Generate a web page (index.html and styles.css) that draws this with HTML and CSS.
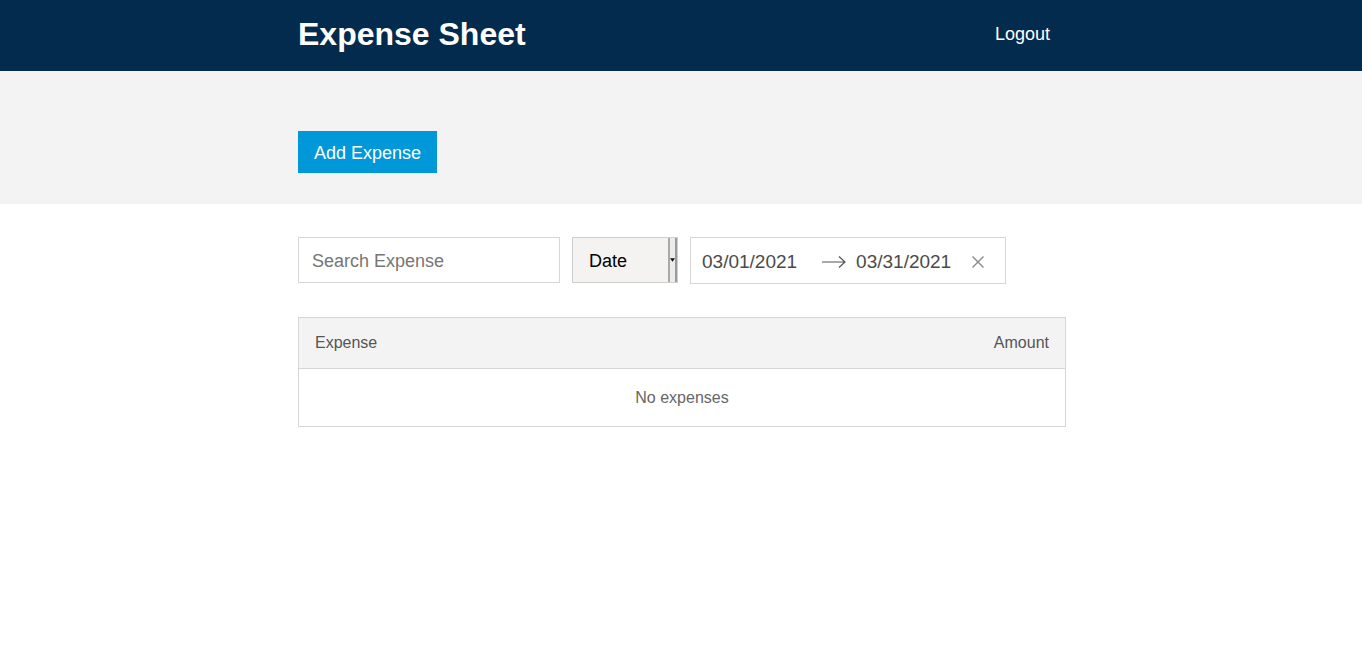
FILE: index.html
```html
<!DOCTYPE html>
<html>
<head>
<meta charset="utf-8">
<title>Expense Sheet</title>
<link rel="stylesheet" href="styles.css">
</head>
<body>
<header class="topbar">
  <div class="container topbar-inner">
    <h1 class="brand">Expense Sheet</h1>
    <a class="logout">Logout</a>
  </div>
</header>
<section class="band">
  <div class="container">
    <button class="add-btn">Add Expense</button>
  </div>
</section>
<main class="container main">
  <div class="filters">
    <div class="search">Search Expense</div>
    <div class="select">
      <span class="select-label">Date</span>
      <span class="select-arrow"><svg width="6" height="4" viewBox="0 0 6 4"><path d="M0 0H6L3 4Z" fill="#111"/></svg></span>
    </div>
    <div class="range">
      <span class="date">03/01/2021</span>
      <svg class="arrow" width="24" height="14" viewBox="0 0 24 14"><path d="M0 7H23M17 1.5L23 7L17 12.5" fill="none" stroke="#555" stroke-width="1.2"/></svg>
      <span class="date">03/31/2021</span>
      <svg class="clear" width="14" height="14" viewBox="0 0 14 14"><path d="M1.5 1.5L12.5 12.5M12.5 1.5L1.5 12.5" stroke="#888" stroke-width="1.4"/></svg>
    </div>
  </div>
  <div class="table">
    <div class="thead">
      <span>Expense</span>
      <span>Amount</span>
    </div>
    <div class="tbody">No expenses</div>
  </div>
</main>
</body>
</html>
```
FILE: styles.css
```css
* { box-sizing: border-box; }
body {
  margin: 0;
  font-family: "Liberation Sans", Arial, sans-serif;
  background: #fff;
}
.container {
  width: 768px;
  margin-left: calc(50% - 383px);
}
.topbar {
  background: #022b4d;
  height: 71px;
}
.topbar-inner {
  height: 71px;
  display: flex;
  align-items: center;
  justify-content: space-between;
  padding-right: 16px;
}
.brand {
  margin: 0;
  color: #fff;
  font-size: 32px;
  font-weight: bold;
  padding-bottom: 2px;
}
.logout {
  color: #fff;
  font-size: 18px;
  padding-bottom: 2px;
}
.band {
  background: #f3f3f3;
  height: 133px;
  padding-top: 60px;
}
.add-btn {
  background: #0098d8;
  color: #fff;
  border: none;
  font-family: "Liberation Sans", Arial, sans-serif;
  font-size: 18px;
  height: 42px;
  padding: 2px 16px 0;
  margin: 0;
}
.main {
  padding-top: 33px;
}
.filters {
  display: flex;
  align-items: flex-start;
  gap: 12px;
}
.search {
  width: 262px;
  height: 46px;
  border: 1px solid #d6d6d6;
  display: flex;
  align-items: center;
  padding: 2px 0 0 13px;
  font-size: 18px;
  color: #767676;
}
.select {
  width: 106px;
  height: 46px;
  background: #f4f3f1;
  border: 1px solid #cfcfcf;
  display: flex;
  align-items: stretch;
}
.select-label {
  flex: 1;
  display: flex;
  align-items: center;
  padding: 3px 0 0 16px;
  font-size: 18px;
  color: #000;
}
.select-arrow {
  width: 9px;
  border-left: 2px solid #a8a8a8;
  border-right: 2px solid #9a9a9a;
  background: #ececec;
  display: flex;
  align-items: center;
  justify-content: center;
}
.range {
  width: 316px;
  height: 47px;
  border: 1px solid #d6d6d6;
  display: flex;
  align-items: center;
  padding: 2px 0 0 11px;
  font-size: 19px;
  color: #4a4a4a;
}
.arrow {
  margin: 0 10px 0 25px;
}
.clear {
  margin-left: 20px;
}
.table {
  margin-top: 33px;
  border: 1px solid #d6d6d6;
}
.thead {
  height: 51px;
  background: #f3f3f3;
  border-bottom: 1px solid #d6d6d6;
  display: flex;
  align-items: center;
  justify-content: space-between;
  padding: 0 16px;
  font-size: 16px;
  color: #555;
}
.tbody {
  height: 57px;
  display: flex;
  align-items: center;
  justify-content: center;
  font-size: 16px;
  color: #666;
}
```
